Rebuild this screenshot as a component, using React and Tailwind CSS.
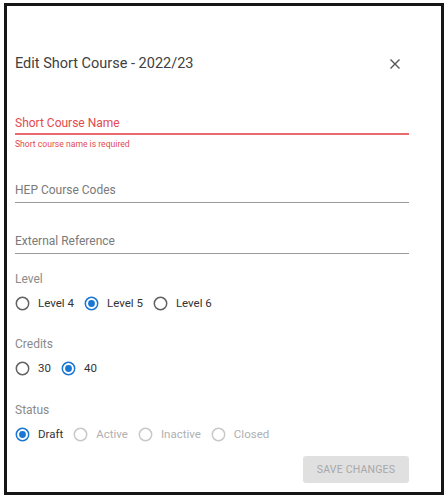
import React from "react";

function Radio({ checked, disabled }) {
  const ring = disabled ? "#c8c8c8" : checked ? "#1976d2" : "#616161";
  return (
    <svg width="15" height="15" viewBox="0 0 15 15" className="shrink-0">
      <circle cx="7.5" cy="7.5" r="6.2" fill="none" stroke={ring} strokeWidth="1.5" />
      {checked && <circle cx="7.5" cy="7.5" r="3.4" fill="#1976d2" />}
    </svg>
  );
}

function RadioRow({ items }) {
  return (
    <div className="flex items-center h-[16px]">
      {items.map((it, i) => (
        <div key={i} className={`flex items-center ${i > 0 ? "ml-[10px]" : ""}`}>
          <Radio checked={it.checked} disabled={it.disabled} />
          <span
            className={`ml-[8px] text-[11.5px] leading-[14px] ${it.disabled ? "text-[#b0b0b0]" : "text-[#333333]"}`}
          >
            {it.label}
          </span>
        </div>
      ))}
    </div>
  );
}

export default function App() {
  return (
    <div
      className="w-[448px] h-[500px] bg-white pt-[3px] pl-[4px]"
      style={{ fontFamily: "Roboto, 'Liberation Sans', sans-serif" }}
    >
      <div className="w-[440px] h-[492px] border-[3px] border-[#161616] pl-[8px] pr-[32px] flex flex-col">
        <div className="mt-[48px] h-[20px] flex items-center justify-between">
          <span className="text-[14.5px] text-[#404040] leading-[20px]">Edit Short Course - 2022/23</span>
          <svg width="12" height="12" viewBox="0 0 12 12" className="mr-[8px]">
            <path d="M1.5 1.5 L10.5 10.5 M10.5 1.5 L1.5 10.5" stroke="#555" strokeWidth="1.4" />
          </svg>
        </div>

        <div className="mt-[42px] h-[14px] text-[12px] leading-[14px] text-[#e24a4f]">Short Course Name</div>
        <div className="mt-[3px] h-[2px] bg-[#e86a6e]" />
        <div className="mt-[3px] h-[12px] text-[8.6px] leading-[12px] text-[#e24a4f]">Short course name is required</div>

        <div className="mt-[33px] h-[14px] text-[12px] leading-[14px] text-[#7a7a7a]">HEP Course Codes</div>
        <div className="mt-[5px] h-[1px] bg-[#9a9a9a]" />

        <div className="mt-[31px] h-[14px] text-[12px] leading-[14px] text-[#7a7a7a]">External Reference</div>
        <div className="mt-[5px] h-[1px] bg-[#9a9a9a]" />

        <div className="mt-[18px] h-[14px] text-[12px] leading-[14px] text-[#8a8a8a]">Level</div>
        <div className="mt-[9px]">
          <RadioRow
            items={[
              { label: "Level 4" },
              { label: "Level 5", checked: true },
              { label: "Level 6" },
            ]}
          />
        </div>

        <div className="mt-[26px] h-[14px] text-[12px] leading-[14px] text-[#8a8a8a]">Credits</div>
        <div className="mt-[9px]">
          <RadioRow items={[{ label: "30" }, { label: "40", checked: true }]} />
        </div>

        <div className="mt-[27px] h-[14px] text-[12px] leading-[14px] text-[#8a8a8a]">Status</div>
        <div className="mt-[9px]">
          <RadioRow
            items={[
              { label: "Draft", checked: true },
              { label: "Active", disabled: true },
              { label: "Inactive", disabled: true },
              { label: "Closed", disabled: true },
            ]}
          />
        </div>

        <div className="mt-[14px] flex justify-end">
          <div className="w-[106px] h-[27px] rounded-[3px] bg-[#e0e0e0] flex items-center justify-center text-[10.5px] text-[#a8a8a8] tracking-[0.2px]">
            SAVE CHANGES
          </div>
        </div>
      </div>
    </div>
  );
}
